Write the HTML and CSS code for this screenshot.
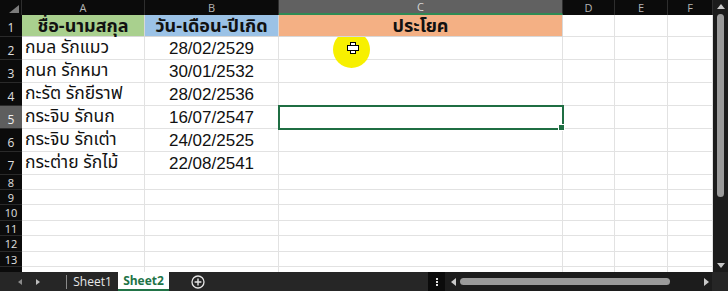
FILE: index.html
```html
<!DOCTYPE html>
<html lang="th">
<head>
<meta charset="utf-8">
<title>Sheet2</title>
<link rel="stylesheet" href="styles.css">
</head>
<body>
<div class="app">
  <div class="main">
    <div class="sheet">
      <div class="corner"><span class="tri"></span></div>
      <div class="ch">A</div>
      <div class="ch">B</div>
      <div class="ch ch-sel">C</div>
      <div class="ch">D</div>
      <div class="ch">E</div>
      <div class="ch">F</div>

      <div class="rh">1</div>
      <div class="c h1 fill-green"><span>ชื่อ-นามสกุล</span></div>
      <div class="c h1 fill-blue"><span>วัน-เดือน-ปีเกิด</span></div>
      <div class="c h1 fill-orange"><span>ประโยค</span></div>
      <div class="c"></div><div class="c"></div><div class="c"></div>

      <div class="rh">2</div>
      <div class="c name">กมล รักแมว</div>
      <div class="c date">28/02/2529</div>
      <div class="c cursor-cell"><span class="spot"></span><span class="plus"></span></div>
      <div class="c"></div><div class="c"></div><div class="c"></div>

      <div class="rh">3</div>
      <div class="c name">กนก รักหมา</div>
      <div class="c date">30/01/2532</div>
      <div class="c"></div><div class="c"></div><div class="c"></div><div class="c"></div>

      <div class="rh">4</div>
      <div class="c name">กะรัต รักยีราฟ</div>
      <div class="c date">28/02/2536</div>
      <div class="c"></div><div class="c"></div><div class="c"></div><div class="c"></div>

      <div class="rh rh-sel">5</div>
      <div class="c name">กระจิบ รักนก</div>
      <div class="c date">16/07/2547</div>
      <div class="c sel"></div><div class="c"></div><div class="c"></div><div class="c"></div>

      <div class="rh">6</div>
      <div class="c name">กระจิบ รักเต่า</div>
      <div class="c date">24/02/2525</div>
      <div class="c"></div><div class="c"></div><div class="c"></div><div class="c"></div>

      <div class="rh">7</div>
      <div class="c name">กระต่าย รักไม้</div>
      <div class="c date">22/08/2541</div>
      <div class="c"></div><div class="c"></div><div class="c"></div><div class="c"></div>

      <div class="rh sm">8</div>
      <div class="c"></div><div class="c"></div><div class="c"></div><div class="c"></div><div class="c"></div><div class="c"></div>
      <div class="rh sm">9</div>
      <div class="c"></div><div class="c"></div><div class="c"></div><div class="c"></div><div class="c"></div><div class="c"></div>
      <div class="rh sm">10</div>
      <div class="c"></div><div class="c"></div><div class="c"></div><div class="c"></div><div class="c"></div><div class="c"></div>
      <div class="rh sm">11</div>
      <div class="c"></div><div class="c"></div><div class="c"></div><div class="c"></div><div class="c"></div><div class="c"></div>
      <div class="rh sm">12</div>
      <div class="c"></div><div class="c"></div><div class="c"></div><div class="c"></div><div class="c"></div><div class="c"></div>
      <div class="rh sm">13</div>
      <div class="c"></div><div class="c"></div><div class="c"></div><div class="c"></div><div class="c"></div><div class="c"></div>
      <div class="rh sm"></div>
      <div class="c"></div><div class="c"></div><div class="c"></div><div class="c"></div><div class="c"></div><div class="c"></div>
    </div>
    <div class="vscroll">
      <span class="arrow-up"></span>
      <span class="vthumb"></span>
      <span class="arrow-down"></span>
    </div>
  </div>
  <div class="bottom">
    <div class="nav">
      <span class="nav-l"></span>
      <span class="nav-r"></span>
    </div>
    <div class="sep"></div>
    <div class="tab">Sheet1</div>
    <div class="tab tab-active">Sheet2</div>
    <div class="add">
      <svg width="14" height="14" viewBox="0 0 14 14"><circle cx="7" cy="7" r="6" fill="none" stroke="#e6e6e6" stroke-width="1.3"/><path d="M7 3.6v6.8M3.6 7h6.8" stroke="#e6e6e6" stroke-width="1.4"/></svg>
    </div>
    <div class="spacer"></div>
    <div class="dots"><i></i><i></i><i></i></div>
    <div class="hscroll">
      <span class="arrow-left"></span>
      <span class="hthumb"></span>
      <span class="arrow-right"></span>
    </div>
    <div class="endcorner"></div>
  </div>
</div>
</body>
</html>
```

FILE: styles.css
```css
* { box-sizing: border-box; margin: 0; padding: 0; }
html, body { width: 728px; height: 291px; overflow: hidden; background: #ffffff; }
body { font-family: "Noto Sans Thai", "Leelawadee UI", Tahoma, "Noto Sans", "DejaVu Sans", sans-serif; }

.app { display: flex; flex-direction: column; width: 728px; height: 291px; }
.main { display: flex; height: 272px; overflow: hidden; }

.sheet {
  display: grid;
  grid-template-columns: 22px 123px 134px 284px 52px 53px 45px;
  grid-template-rows: 15px 22px 23px 23px 23px 23px 23px 23px 15px 15px 16px 15px 16px 15px 15px;
  width: 713px;
  overflow: hidden;
  background: #ffffff;
}

.corner { background: #0b0b0b; border-right: 1px solid #2e2e2e; position: relative; }
.tri { position: absolute; right: 2px; bottom: 2px; width: 0; height: 0;
  border-left: 10px solid transparent; border-bottom: 8px solid #7b7b7b; }

.ch {
  background: #0b0b0b; color: #b5b5b5;
  font-family: "Segoe UI", "Open Sans", "DejaVu Sans", sans-serif; font-size: 11px;
  display: flex; align-items: center; justify-content: center;
  border-right: 1px solid #2e2e2e; line-height: 1; position: relative; z-index: 1;
}
.ch-sel { background: #616161; color: #d6d6d6; border-bottom: 2px solid #2f8a55; }

.rh {
  background: #0b0b0b; color: #e0e0e0;
  font-family: "Segoe UI", "Open Sans", "DejaVu Sans", sans-serif; font-size: 12px;
  display: flex; align-items: flex-end; justify-content: center; padding-bottom: 2px;
  border-bottom: 1px solid #2a2a2a; line-height: 1; overflow: hidden;
}
.rh.sm { align-items: center; padding-bottom: 0; font-size: 11px; line-height: 11px; }
.rh-sel { background: #5e5e5e; color: #f0f0f0; }

.c {
  border-right: 1px solid #e2e2e2; border-bottom: 1px solid #e2e2e2;
  font-size: 17.5px; color: #111111; line-height: 1;
  display: flex; align-items: center; white-space: nowrap; position: relative;
}
.h1 { justify-content: center; font-weight: bold; font-size: 18px; line-height: 20px;
  border-right-color: #d8d8d8; border-bottom-color: #d8d8d8; padding-top: 2px; }
.fill-green { background: #a9d08e; }
.fill-blue { background: #9bc2e6; }
.fill-orange { background: #f4b084; }
.name { padding-left: 3px; }
.date { justify-content: center; font-family: "Liberation Sans", Arial, sans-serif; font-size: 17px; }

.sel { outline: 2px solid #1f6e43; outline-offset: -1px; z-index: 2; }
.sel::after { content: ""; position: absolute; right: -3px; bottom: -3px; width: 5px; height: 5px;
  background: #1f6e43; border: 1px solid #ffffff; }

.cursor-cell { overflow: visible; }
.spot { position: absolute; left: 54px; top: -6px; width: 37px; height: 37px; border-radius: 50%;
  background: #f7f000; clip-path: inset(6px 0 0 0); z-index: 3; }
.plus { position: absolute; left: 69px; top: 6px; width: 8px; height: 8px; z-index: 4; }
.plus::before, .plus::after { content: ""; position: absolute; background: #ffffff; border: 1px solid #000000; }
.plus::before { left: 2px; top: -1px; width: 4px; height: 10px; }
.plus::after { left: -1px; top: 2px; width: 10px; height: 4px; }

.vscroll { width: 15px; background: #1c1c1c; display: flex; flex-direction: column; align-items: center; padding-top: 4px; }
.arrow-up { width: 0; height: 0; border-left: 4px solid transparent; border-right: 4px solid transparent; border-bottom: 5px solid #c8c8c8; }
.vthumb { width: 7px; height: 183px; background: #9a9a9a; border-radius: 4px; margin-top: 5px; }
.arrow-down { width: 0; height: 0; border-left: 4px solid transparent; border-right: 4px solid transparent; border-top: 5px solid #c8c8c8; margin-top: auto; margin-bottom: 4px; }

.bottom { height: 19px; display: flex; align-items: stretch; background: #262626;
  font-family: "Segoe UI", "Open Sans", "DejaVu Sans", sans-serif; font-size: 12px; }
.nav { width: 66px; display: flex; align-items: center; padding-left: 18px; gap: 14px; }
.nav-l { width: 0; height: 0; border-top: 3px solid transparent; border-bottom: 3px solid transparent; border-right: 4px solid #8a8a8a; }
.nav-r { width: 0; height: 0; border-top: 3px solid transparent; border-bottom: 3px solid transparent; border-left: 4px solid #bdbdbd; }
.sep { width: 1px; margin: 3px 0 2px; background: #8a8a8a; }
.tab { width: 51px; display: flex; align-items: center; justify-content: center; color: #e6e6e6; }
.tab-active { background: #ffffff; color: #217346; font-weight: bold; border-bottom: 2px solid #217346; }
.add { width: 58px; display: flex; align-items: center; justify-content: center; }
.spacer { flex: 1; }
.dots { width: 17px; background: #0b0b0b; display: flex; flex-direction: column; align-items: center; justify-content: center; gap: 1px; }
.dots i { width: 2px; height: 2px; background: #e0e0e0; }
.hscroll { width: 267px; background: #1c1c1c; display: flex; align-items: center; padding: 0 3px 0 6px; }
.arrow-left { width: 0; height: 0; border-top: 4px solid transparent; border-bottom: 4px solid transparent; border-right: 5px solid #c8c8c8; }
.hthumb { width: 210px; height: 7px; background: #9a9a9a; border-radius: 4px; margin-left: 4px; }
.arrow-right { width: 0; height: 0; border-top: 4px solid transparent; border-bottom: 4px solid transparent; border-left: 5px solid #c8c8c8; margin-left: auto; }
.endcorner { width: 16px; background: #262626; }
```
